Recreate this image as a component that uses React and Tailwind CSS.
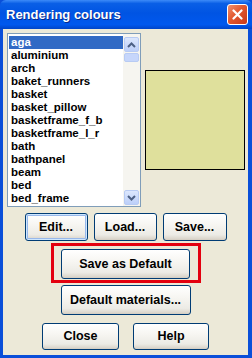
const items = [
  "aga",
  "aluminium",
  "arch",
  "baket_runners",
  "basket",
  "basket_pillow",
  "basketframe_f_b",
  "basketframe_l_r",
  "bath",
  "bathpanel",
  "beam",
  "bed",
  "bed_frame",
];

const XpButton = ({ children, className = "", primary = false }) => (
  <button
    className={
      "flex items-center justify-center rounded-[3px] border border-[#003c74] bg-[linear-gradient(to_bottom,#ffffff_0%,#f7f6f2_40%,#ecebe5_80%,#d6d0c5_100%)] text-[12.5px] font-bold text-black " +
      (primary ? "shadow-[inset_0_0_0_1px_#cee7ff,inset_0_0_0_2px_#98b8ea] " : "shadow-[inset_0_-1px_0_#d6d0c5] ") +
      className
    }
  >
    {children}
  </button>
);

const ScrollBtn = ({ up }) => (
  <div className="flex h-[15px] w-[15px] items-center justify-center rounded-[2px] border border-[#b8cbf3] bg-[linear-gradient(to_bottom,#dce7fd,#bccff9)]">
    <svg width="9" height="6" viewBox="0 0 9 6">
      <path
        d={up ? "M1 5 L4.5 1.5 L8 5" : "M1 1 L4.5 4.5 L8 1"}
        fill="none"
        stroke="#4d6185"
        strokeWidth="2"
      />
    </svg>
  </div>
);

export default function App() {
  return (
    <div
      className="flex h-[358px] w-[252px] flex-col bg-[#0a4fd9]"
      style={{ fontFamily: '"Liberation Sans", Arial, sans-serif' }}
    >
      {/* title bar */}
      <div className="flex h-[29px] shrink-0 items-center justify-between rounded-t-[6px] bg-[linear-gradient(to_bottom,#3d8bf8_0%,#0a5fe6_12%,#0054e3_45%,#0058ee_85%,#0044c8_100%)] pl-[6px] pr-[4px]">
        <span className="text-[13px] font-bold text-white [text-shadow:1px_1px_0_#0a2a8a]">
          Rendering colours
        </span>
        <div className="flex h-[21px] w-[21px] items-center justify-center rounded-[3px] border border-white bg-[linear-gradient(135deg,#f0906e_0%,#e2582f_45%,#c8381a_100%)]">
          <svg width="11" height="11" viewBox="0 0 11 11">
            <path d="M1.5 1.5 L9.5 9.5 M9.5 1.5 L1.5 9.5" stroke="white" strokeWidth="2.2" strokeLinecap="round" />
          </svg>
        </div>
      </div>

      {/* body */}
      <div className="flex flex-1 flex-col border-b-[3px] border-l-[3px] border-r-[4px] border-[#0a4fd9] bg-[#ece9d8]">
        <div className="mt-[4px] flex items-center pl-[4px]">
          {/* listbox */}
          <div className="flex h-[174px] w-[134px] overflow-hidden border border-[#7f9db9] bg-white">
            <div className="flex-1 overflow-hidden pl-[1px] pt-[2px]">
              {items.map((it, i) => (
                <div
                  key={it}
                  className={
                    "h-[13px] pl-[2px] text-[11.5px] font-bold leading-[13px] " +
                    (i === 0 ? "bg-[#316ac5] text-white" : "text-black")
                  }
                >
                  {it}
                </div>
              ))}
            </div>
            <div className="flex w-[17px] flex-col bg-[#f6f5f0] px-[1px] pb-[1px] pt-[3px]">
              <ScrollBtn up />
              <div className="mt-[1px] h-[9px] w-[15px] rounded-[2px] border border-[#b8cbf3] bg-[#c6d6fb]" />
              <div className="flex-1" />
              <ScrollBtn />
            </div>
          </div>
          {/* colour swatch */}
          <div className="ml-[4px] h-[100px] w-[100px] border border-black bg-[#dfe09c]" />
        </div>

        <div className="mt-[6px] flex justify-center gap-[6px]">
          <XpButton primary className="h-[28px] w-[63px]">Edit...</XpButton>
          <XpButton className="h-[28px] w-[63px]">Load...</XpButton>
          <XpButton className="h-[28px] w-[64px]">Save...</XpButton>
        </div>

        <div className="mt-[2px] flex justify-center">
          <div className="flex h-[40px] w-[150px] items-start justify-center border-[3px] border-[#e3000f] pt-[3px]">
            <XpButton className="h-[30px] w-[129px]">Save as Default</XpButton>
          </div>
        </div>

        <div className="mt-[2px] flex justify-center">
          <XpButton className="h-[30px] w-[130px]">Default materials...</XpButton>
        </div>

        <div className="mt-[8px] flex justify-center gap-[14px]">
          <XpButton className="h-[27px] w-[77px]">Close</XpButton>
          <XpButton className="h-[27px] w-[76px]">Help</XpButton>
        </div>
      </div>
    </div>
  );
}
